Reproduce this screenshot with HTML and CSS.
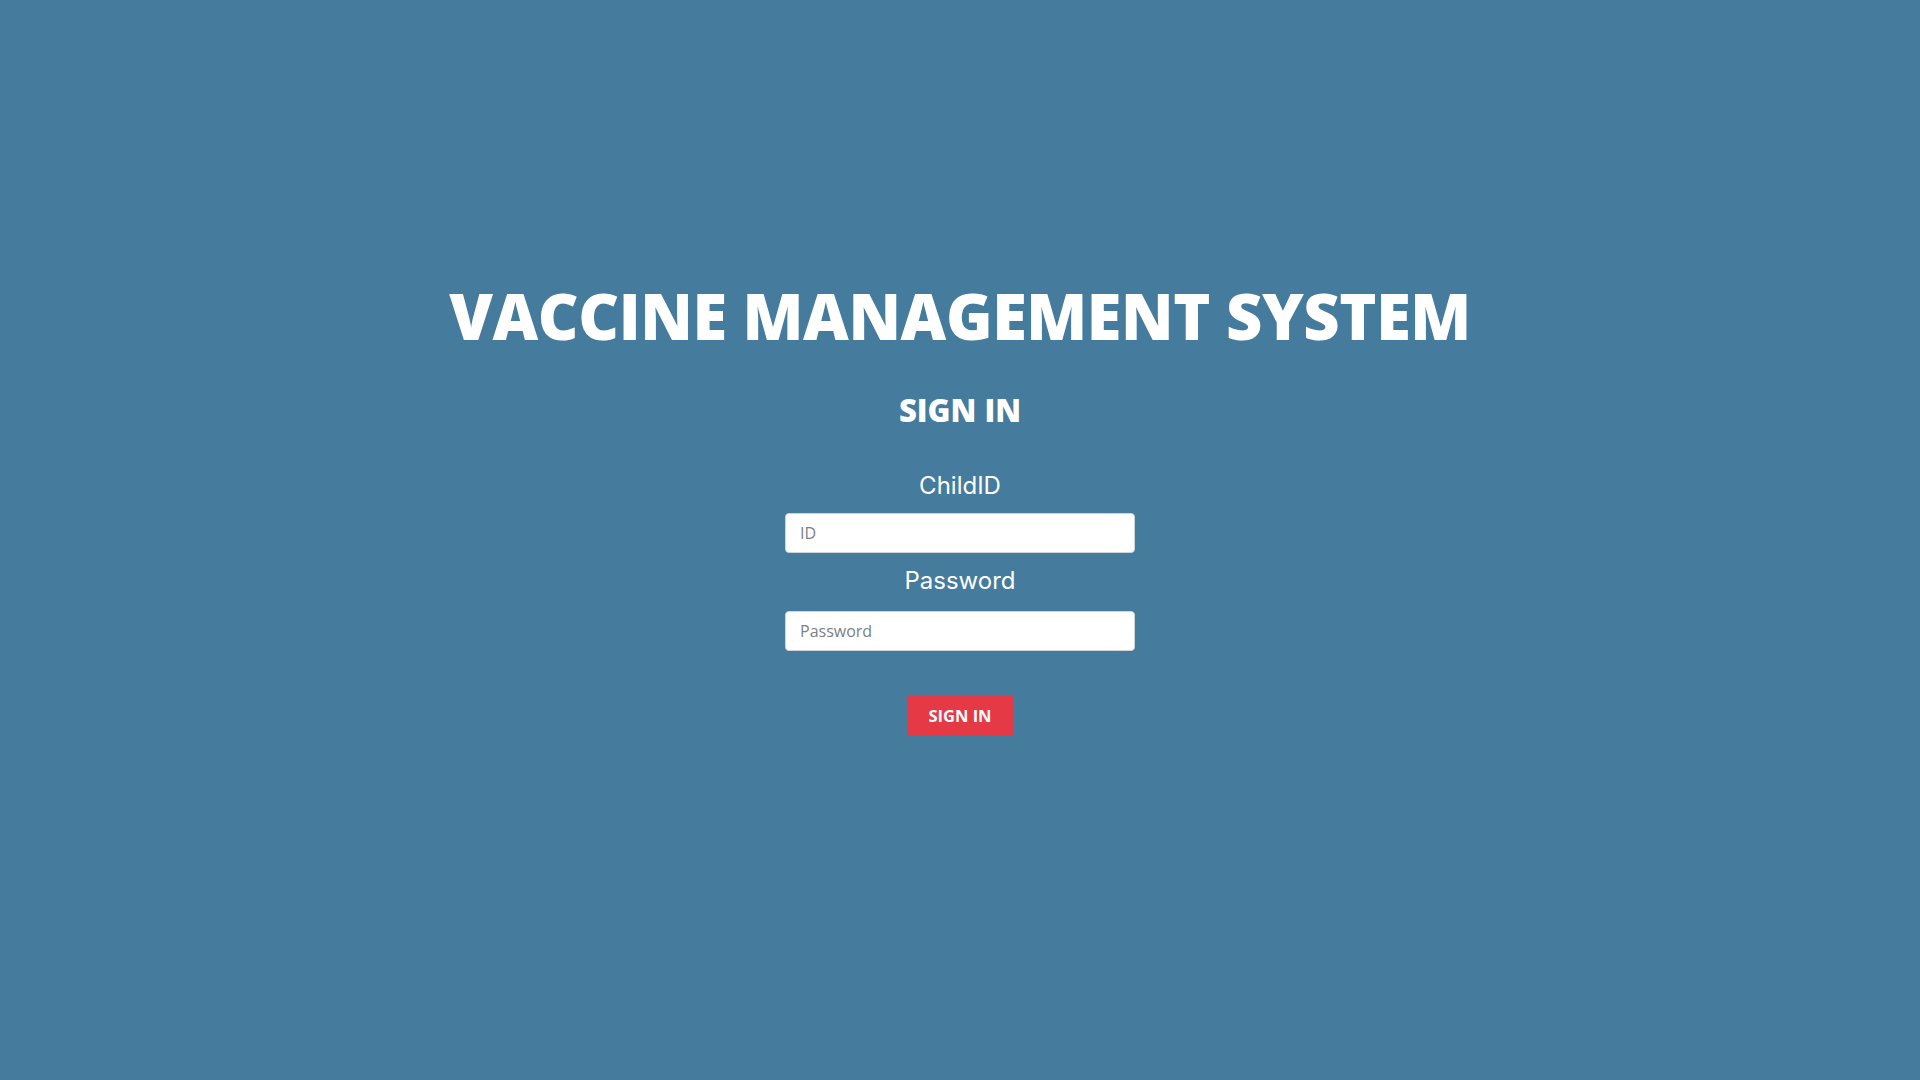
FILE: index.html
```html
<!DOCTYPE html>
<html lang="en">
<head>
<meta charset="utf-8">
<title>Vaccine Management System</title>
<link rel="stylesheet" href="styles.css">
</head>
<body>
<main class="page">
  <h1 class="title">VACCINE MANAGEMENT SYSTEM</h1>
  <h2 class="subtitle">SIGN IN</h2>
  <form class="form">
    <label class="label" for="cid">ChildID</label>
    <input class="field" id="cid" type="text" placeholder="ID">
    <label class="label label-second" for="pwd">Password</label>
    <input class="field field-second" id="pwd" type="password" placeholder="Password">
    <button class="btn" type="button">SIGN IN</button>
  </form>
</main>
</body>
</html>
```
FILE: styles.css
```css
html, body {
  margin: 0;
  padding: 0;
}
body {
  background: #457b9d;
  min-height: 100vh;
  font-family: "Open Sans", "Liberation Sans", sans-serif;
}
.page {
  display: flex;
  flex-direction: column;
  align-items: center;
  padding-top: 284px;
}
.title {
  margin: 0;
  font-family: "Open Sans", sans-serif;
  font-weight: 800;
  font-size: 63px;
  line-height: 64px;
  color: #fff;
  letter-spacing: -0.4px;
}
.subtitle {
  margin: 47px 0 0;
  font-family: "Open Sans", sans-serif;
  font-weight: 800;
  font-size: 31px;
  line-height: 31px;
  color: #fff;
}
.form {
  display: flex;
  flex-direction: column;
  align-items: center;
  margin-top: 48px;
}
.label {
  font-family: "Inter", "Roboto", sans-serif;
  font-size: 24px;
  line-height: 24px;
  color: #fff;
}
.label-second {
  margin-top: 16px;
}
.field {
  box-sizing: border-box;
  width: 350px;
  height: 40px;
  margin-top: 15px;
  padding: 0 14px;
  border: 1px solid #ced4da;
  border-radius: 4px;
  background: #fff;
  font-family: "Open Sans", sans-serif;
  font-size: 16px;
  color: #333;
  outline: none;
}
.field::placeholder {
  color: #7a7f85;
}
.field-second {
  margin-top: 18px;
}
.btn {
  margin-top: 44px;
  width: 107px;
  height: 40px;
  border: none;
  border-radius: 3px;
  background: #e63946;
  color: #fff;
  font-family: "Open Sans", sans-serif;
  font-weight: 700;
  font-size: 16.5px;
  cursor: pointer;
}
```
